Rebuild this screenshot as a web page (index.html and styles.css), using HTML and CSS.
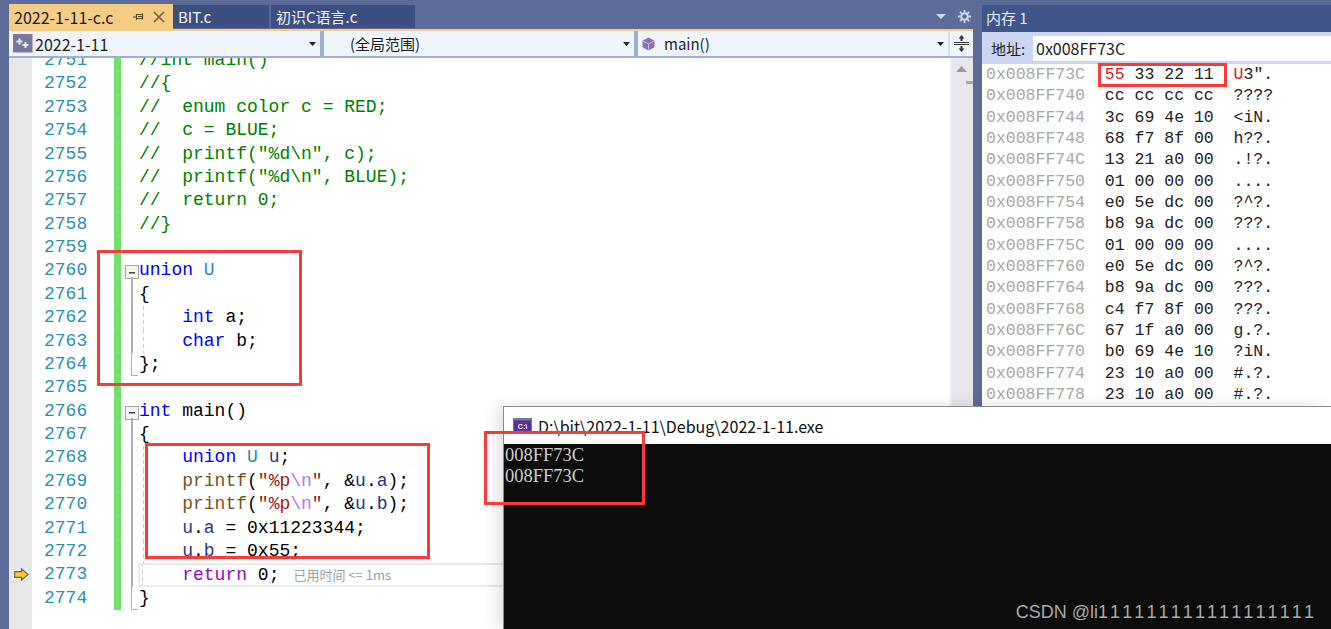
FILE: index.html
```html
<!DOCTYPE html>
<html lang="zh">
<head>
<meta charset="utf-8">
<title>2022-1-11-c.c</title>
<link rel="stylesheet" href="styles.css">
</head>
<body>
<div class="workspace">
  <section class="doc">
    <div class="tabstrip">
      <div class="tab active">
        <span class="tab-name">2022-1-11-c.c</span>
        <svg class="tab-pin" width="12" height="12" viewBox="0 0 12 12"><path d="M0 6h3.500M3.500 3v6M3.500 3.500h6v4h-6M9.500 2.500v6M5 5.500h4.500" fill="none" stroke="#5c4a28" stroke-width="1.200"/></svg>
        <svg class="tab-x" width="12" height="12" viewBox="0 0 12 12"><path d="M1 1l10 10M11 1L1 11" stroke="#7a5f38" stroke-width="1.600"/></svg>
      </div>
      <div class="tab idle first">BIT.c</div>
      <div class="tab idle second">初识C语言.c</div>
      <div class="tab-tools">
        <svg width="11" height="6" viewBox="0 0 11 6"><path d="M0 0h10l-5 5z" fill="#cfd8f0"/></svg>
        <svg class="gear" width="13" height="13" viewBox="0 0 13 13"><circle cx="6.500" cy="6.500" r="3.300" fill="none" stroke="#cfd8f0" stroke-width="2"/><path d="M6.500 0v2.500M6.500 10.500V13M0 6.500h2.500M10.500 6.500H13M1.900 1.900l1.800 1.800M9.300 9.300l1.800 1.800M1.900 11.100l1.800-1.800M9.300 3.700l1.800-1.800" stroke="#cfd8f0" stroke-width="1.800"/></svg>
      </div>
    </div>
    <div class="navbar">
      <div class="combo one">
        <svg class="proj" width="20" height="19" viewBox="0 0 20 19"><rect x=".75" y=".75" width="18" height="17" fill="#6f7c99" stroke="#9a6aa8" stroke-width="1.500"/><path d="M6.500 4.500v6M3.500 7.500h6M12.500 8v6M9.500 11h6" stroke="#e8e8ee" stroke-width="2"/></svg>
        <span class="combo-text num-text">2022-1-11</span>
        <svg class="drop" width="7" height="4" viewBox="0 0 7 4"><path d="M0 0h7L3.500 4z" fill="#222"/></svg>
      </div>
      <div class="divider"></div>
      <div class="combo two">
        <span class="combo-text">(全局范围)</span>
        <svg class="drop" width="7" height="4" viewBox="0 0 7 4"><path d="M0 0h7L3.500 4z" fill="#222"/></svg>
      </div>
      <div class="divider"></div>
      <div class="combo three">
        <svg class="cube" width="13" height="14" viewBox="0 0 13 14"><path d="M6.500.5l6 3.300v6.400l-6 3.300-6-3.300V3.800z" fill="#8a6fb0"/><path d="M1 4l5.500 3 5.500-3M6.500 7v6" fill="none" stroke="#cdbfe0" stroke-width="1"/></svg>
        <span class="combo-text">main()</span>
        <svg class="drop" width="7" height="4" viewBox="0 0 7 4"><path d="M0 0h7L3.500 4z" fill="#222"/></svg>
      </div>
      <div class="splitter">
        <svg width="15" height="17" viewBox="0 0 15 17"><path d="M0 7.500h15M0 9.500h15" stroke="#333" stroke-width="1"/><path d="M7.500 0l3 3.500h-2V6h-2V3.500h-2zM7.500 17l3-3.500h-2V11h-2v2.500h-2z" fill="#333"/></svg>
      </div>
    </div>
    <div class="editor">
      <div class="lines">
        <div class="row"><span class="glyph"></span><span class="num">2751</span><span class="green"></span><span class="fold"></span><span class="code cmt">//int main()</span></div>
        <div class="row"><span class="glyph"></span><span class="num">2752</span><span class="green"></span><span class="fold"></span><span class="code cmt">//{</span></div>
        <div class="row"><span class="glyph"></span><span class="num">2753</span><span class="green"></span><span class="fold"></span><span class="code cmt">//  enum color c = RED;</span></div>
        <div class="row"><span class="glyph"></span><span class="num">2754</span><span class="green"></span><span class="fold"></span><span class="code cmt">//  c = BLUE;</span></div>
        <div class="row"><span class="glyph"></span><span class="num">2755</span><span class="green"></span><span class="fold"></span><span class="code cmt">//  printf("%d\n", c);</span></div>
        <div class="row"><span class="glyph"></span><span class="num">2756</span><span class="green"></span><span class="fold"></span><span class="code cmt">//  printf("%d\n", BLUE);</span></div>
        <div class="row"><span class="glyph"></span><span class="num">2757</span><span class="green"></span><span class="fold"></span><span class="code cmt">//  return 0;</span></div>
        <div class="row"><span class="glyph"></span><span class="num">2758</span><span class="green"></span><span class="fold"></span><span class="code cmt">//}</span></div>
        <div class="row"><span class="glyph"></span><span class="num">2759</span><span class="green"></span><span class="fold"></span><span class="code"></span></div>
        <div class="row"><span class="glyph"></span><span class="num">2760</span><span class="green"></span><span class="fold open"></span><span class="code"><span class="kw">union</span> <span class="ty">U</span></span></div>
        <div class="row"><span class="glyph"></span><span class="num">2761</span><span class="green"></span><span class="fold mid"></span><span class="code">{</span></div>
        <div class="row"><span class="glyph"></span><span class="num">2762</span><span class="green"></span><span class="fold mid"></span><span class="code guide">    <span class="kw">int</span> a;</span></div>
        <div class="row"><span class="glyph"></span><span class="num">2763</span><span class="green"></span><span class="fold mid"></span><span class="code guide">    <span class="kw">char</span> b;</span></div>
        <div class="row"><span class="glyph"></span><span class="num">2764</span><span class="green"></span><span class="fold end"></span><span class="code">};</span></div>
        <div class="row"><span class="glyph"></span><span class="num">2765</span><span class="green"></span><span class="fold"></span><span class="code"></span></div>
        <div class="row"><span class="glyph"></span><span class="num">2766</span><span class="green"></span><span class="fold open"></span><span class="code"><span class="kw">int</span> main()</span></div>
        <div class="row"><span class="glyph"></span><span class="num">2767</span><span class="green"></span><span class="fold mid"></span><span class="code">{</span></div>
        <div class="row"><span class="glyph"></span><span class="num">2768</span><span class="green"></span><span class="fold mid"></span><span class="code guide">    <span class="kw">union</span> <span class="ty">U</span> <span class="var">u</span>;</span></div>
        <div class="row"><span class="glyph"></span><span class="num">2769</span><span class="green"></span><span class="fold mid"></span><span class="code guide">    <span class="fn">printf</span>(<span class="str">"%p</span><span class="esc">\n</span><span class="str">"</span>, &amp;<span class="var">u</span>.<span class="var">a</span>);</span></div>
        <div class="row"><span class="glyph"></span><span class="num">2770</span><span class="green"></span><span class="fold mid"></span><span class="code guide">    <span class="fn">printf</span>(<span class="str">"%p</span><span class="esc">\n</span><span class="str">"</span>, &amp;<span class="var">u</span>.<span class="var">b</span>);</span></div>
        <div class="row"><span class="glyph"></span><span class="num">2771</span><span class="green"></span><span class="fold mid"></span><span class="code guide">    <span class="var">u</span>.<span class="var">a</span> = 0x11223344;</span></div>
        <div class="row"><span class="glyph"></span><span class="num">2772</span><span class="green"></span><span class="fold mid"></span><span class="code guide">    <span class="var">u</span>.<span class="var">b</span> = 0x55;</span></div>
        <div class="row"><span class="glyph"><svg width="15" height="13" viewBox="0 0 15 13"><path d="M.7 3.700h6.800V.9l6.600 5.600-6.600 5.600V9.300H.7z" fill="#f7c92a" stroke="#76694a" stroke-width="1.200"/></svg></span><span class="num">2773</span><span class="green"></span><span class="fold mid"></span><span class="code guide current">    <span class="ret">return</span> 0;<span class="elapsed">已用时间 &lt;= 1ms</span></span></div>
        <div class="row"><span class="glyph"></span><span class="num">2774</span><span class="green"></span><span class="fold end"></span><span class="code">}</span></div>
      </div>
      <div class="scrollbar">
        <svg class="scroll-up" width="11" height="6" viewBox="0 0 11 6"><path d="M5.500 0l5.500 6H0z" fill="#9a9aaa"/></svg>
        <div class="scroll-mark"></div>
      </div>
    </div>
  </section>
  <section class="tool">
    <div class="tool-title">内存 1</div>
    <div class="tool-bar">
      <span class="addr-label">地址:</span>
      <div class="addr-input">0x008FF73C</div>
    </div>
    <div class="memory">
      <div class="mem"><span class="ad">0x008FF73C</span>  <span class="hot">55</span> 33 22 11  <span class="hot">U</span>3".</div>
      <div class="mem"><span class="ad">0x008FF740</span>  cc cc cc cc  ????</div>
      <div class="mem"><span class="ad">0x008FF744</span>  3c 69 4e 10  &lt;iN.</div>
      <div class="mem"><span class="ad">0x008FF748</span>  68 f7 8f 00  h??.</div>
      <div class="mem"><span class="ad">0x008FF74C</span>  13 21 a0 00  .!?.</div>
      <div class="mem"><span class="ad">0x008FF750</span>  01 00 00 00  ....</div>
      <div class="mem"><span class="ad">0x008FF754</span>  e0 5e dc 00  ?^?.</div>
      <div class="mem"><span class="ad">0x008FF758</span>  b8 9a dc 00  ???.</div>
      <div class="mem"><span class="ad">0x008FF75C</span>  01 00 00 00  ....</div>
      <div class="mem"><span class="ad">0x008FF760</span>  e0 5e dc 00  ?^?.</div>
      <div class="mem"><span class="ad">0x008FF764</span>  b8 9a dc 00  ???.</div>
      <div class="mem"><span class="ad">0x008FF768</span>  c4 f7 8f 00  ???.</div>
      <div class="mem"><span class="ad">0x008FF76C</span>  67 1f a0 00  g.?.</div>
      <div class="mem"><span class="ad">0x008FF770</span>  b0 69 4e 10  ?iN.</div>
      <div class="mem"><span class="ad">0x008FF774</span>  23 10 a0 00  #.?.</div>
      <div class="mem"><span class="ad">0x008FF778</span>  23 10 a0 00  #.?.</div>
    </div>
  </section>
</div>
<div class="console">
  <div class="console-title">
    <svg width="19" height="15" viewBox="0 0 19 15"><rect width="19" height="15" fill="#7a7a86"/><rect x="1" y="2.500" width="17" height="11.500" fill="#5b2d9e"/><text x="9.500" y="11" text-anchor="middle" class="console-glyph">C:\</text></svg>
    <span>D:\bit\2022-1-11\Debug\2022-1-11.exe</span>
  </div>
  <div class="console-body">
    <div>008FF73C</div>
    <div>008FF73C</div>
  </div>
  <div class="watermark">CSDN @li<span class="ones">111111111111111111</span></div>
</div>
<div class="mark m-union"></div>
<div class="mark m-main"></div>
<div class="mark m-console"></div>
<div class="mark m-bytes"></div>
</body>
</html>
```

FILE: styles.css
```css
* { box-sizing: border-box; }
html, body { margin: 0; height: 100%; }
body {
  position: relative;
  overflow: hidden;
  background: #5d6b99;
  font-family: "Noto Sans CJK SC", "Noto Sans", sans-serif;
  color: #1e1e1e;
}
.workspace { display: flex; height: 629px; padding-left: 9px; gap: 9px; }
.doc { width: 964px; display: flex; flex-direction: column; }
.tool { flex: 1; min-width: 0; padding-top: 5px; display: flex; flex-direction: column; }

/* tabs */
.tabstrip {
  height: 31px; padding-top: 4px; display: flex; align-items: flex-start;
  border-bottom: 2px solid #f5cc84;
}
.tab { display: flex; align-items: center; font-size: 15px; white-space: nowrap; }
.tab.active { width: 164px; height: 25px; background: #f5cc84; padding-left: 5px; color: #1e1e1e; }
.tab-name { width: 115px; font-size: 16px; }
.tab-pin { margin-left: 4px; }
.tab-x { margin-left: 8px; }
.tab.idle { height: 23px; margin-top: 1px; background: #3d4f80; color: #f2f5fc; padding-left: 5px; }
.tab.first { width: 96px; }
.tab.second { width: 144px; margin-left: 2px; }
.tab-tools { margin-left: auto; display: flex; align-items: center; gap: 11px; padding: 2px 2px 0 0; height: 23px; }

/* navigation bar */
.navbar { height: 27px; display: flex; background: #f0f4fd; border-bottom: 2px solid #9db0d3; }
.combo { position: relative; display: flex; align-items: center; font-size: 15px; flex: none; }
.combo.one { width: 311px; padding-left: 4px; gap: 2px; }
.combo.two { width: 310px; padding-left: 26px; }
.combo.three { width: 310px; padding-left: 4px; }
.num-text { font-size: 16px; }
.cube { margin-right: 9px; }
.drop { position: absolute; right: 4px; top: 11px; }
.divider { width: 4px; background: #9db0d3; flex: none; }
.splitter {
  flex: 1; display: flex; align-items: center; justify-content: center;
  border-left: 2px solid #d4dcec;
}

/* editor */
.editor { flex: 1; min-height: 0; display: flex; background: #fff; overflow: hidden; }
.lines {
  flex: 1; min-width: 0; overflow: hidden;
  background: linear-gradient(to right, #e6e7e8 23px, #fff 23px);
  font-family: "Liberation Mono", monospace; font-size: 18px; color: #000;
}
.row { display: flex; height: 23.38px; line-height: 23.38px; white-space: pre; }
.row:first-child { margin-top: -9px; }
.glyph { width: 23px; flex: none; display: flex; align-items: center; justify-content: center; padding-left: 1px; }
.num { width: 82px; flex: none; padding-left: 12px; color: #2b91af; }
.green { width: 7px; flex: none; background: #6fe06b; box-shadow: inset 0 -1px 0 #7fe47b; }
.fold { width: 18px; flex: none; position: relative; }
.fold.open::before {
  content: ""; position: absolute; left: 4px; top: 6px; width: 12px; height: 12px;
  border: 1px solid #a5a5a5; background: linear-gradient(#444, #444) center / 6px 1.5px no-repeat #f4f4f4;
}
.fold.open::after { content: ""; position: absolute; left: 10px; top: 18px; bottom: 0; width: 1.5px; background: #b0b0b0; }
.fold.mid::before { content: ""; position: absolute; left: 10px; top: 0; bottom: 0; width: 1.5px; background: #b0b0b0; }
.fold.end::before {
  content: ""; position: absolute; left: 10px; top: 0; bottom: 0; width: 6px;
  border-left: 1.5px solid #b0b0b0; border-bottom: 1.5px solid #b0b0b0;
}
.code { flex: 1; min-width: 0; }
.guide { background: repeating-linear-gradient(#cfcfcf 0 4px, transparent 4px 7px) 4px 0 / 1px 100% no-repeat; }
.current { box-shadow: inset 0 0 0 2px #e9e9f1; margin-left: -1px; padding-left: 1px; }
.cmt { color: #008000; }
.kw { color: #0000ff; }
.ty { color: #2b91af; }
.fn { color: #74531f; }
.str { color: #a31515; }
.esc { color: #b776fb; }
.ret { color: #8f08c4; }
.var { color: #1f377f; }
.elapsed { font-family: "Noto Sans CJK SC", "Noto Sans", sans-serif; font-size: 13px; color: #a0a0a0; margin-left: 14px; }
.scrollbar { width: 23px; flex: none; background: #e6e6ec; border-left: 2px solid #eeeef3; position: relative; padding: 8px 0 0 4px; }
.scroll-up { display: block; }
.scroll-mark { position: absolute; right: 0; top: 23px; width: 7px; height: 3px; background: #a8a8b4; }

/* memory */
.tool-title { height: 27px; background: #40558a; color: #e8ecf8; font-size: 15px; line-height: 25px; padding-left: 4px; }
.tool-bar { height: 32px; background: #ccd6f0; display: flex; align-items: center; padding-left: 9px; gap: 6px; font-size: 16px; }
.addr-label { width: 36px; flex: none; font-size: 15px; white-space: nowrap; }
.addr-input { flex: 1; height: 25px; background: #fff; line-height: 24px; padding-left: 3px; }
.memory { flex: 1; background: #fff; font-family: "Liberation Mono", monospace; font-size: 16.5px; color: #222; padding-left: 4px; }
.mem { height: 21.33px; line-height: 21.33px; white-space: pre; }
.ad { color: #a8a8a8; }
.hot { color: #e81123; }

/* console window */
.console {
  position: absolute; left: 503px; top: 406px; right: 0; bottom: 0;
  display: flex; flex-direction: column;
  border-top: 1px solid #8a8a8a; border-left: 1px solid #8a8a8a;
  box-shadow: -6px 0 14px rgba(0, 0, 0, .12);
  background: #0c0c0c;
}
.console-title { height: 37px; background: #fff; display: flex; align-items: center; gap: 6px; padding-left: 9px; font-size: 16px; color: #111; flex: none; }
.console-glyph { font-family: "Liberation Sans", sans-serif; font-size: 7px; font-weight: 700; fill: #fff; }
.console-body { padding: 1px 0 0 1px; font-family: "Liberation Serif", serif; font-size: 18.5px; line-height: 20.5px; color: #cccccc; }
.watermark { position: absolute; right: 15px; bottom: 6px; font-family: "Liberation Sans", sans-serif; font-size: 18px; color: #a8a8a8; font-kerning: none; white-space: nowrap; }
.ones { letter-spacing: 2.1px; }

/* red annotation boxes */
.mark { position: absolute; border: 3px solid #fb3a3a; }
.m-union { left: 97px; top: 250px; width: 205px; height: 136px; }
.m-main { left: 145px; top: 443px; width: 285px; height: 116px; }
.m-console { left: 484px; top: 431px; width: 161px; height: 74px; }
.m-bytes { left: 1098px; top: 63px; width: 129px; height: 24px; }
```
